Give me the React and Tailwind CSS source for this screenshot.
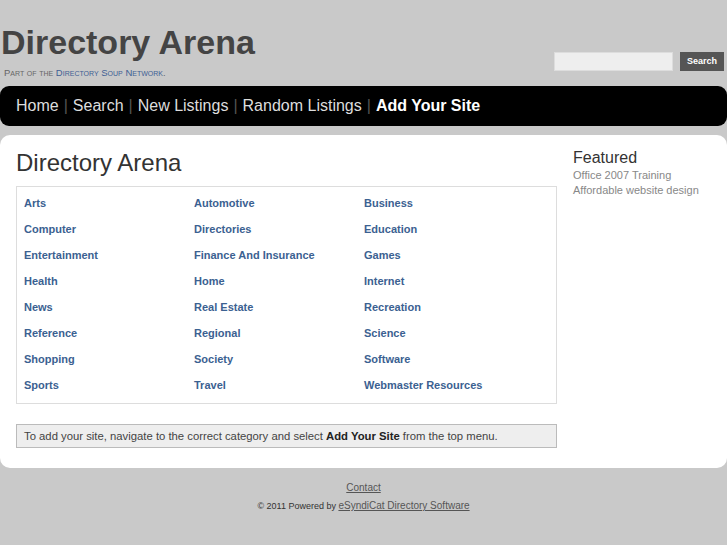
import React from 'react'

const categories = [
  ['Arts', 'Automotive', 'Business'],
  ['Computer', 'Directories', 'Education'],
  ['Entertainment', 'Finance And Insurance', 'Games'],
  ['Health', 'Home', 'Internet'],
  ['News', 'Real Estate', 'Recreation'],
  ['Reference', 'Regional', 'Science'],
  ['Shopping', 'Society', 'Software'],
  ['Sports', 'Travel', 'Webmaster Resources'],
]

const navItems = ['Home', 'Search', 'New Listings', 'Random Listings']

export default function App() {
  return (
    <div className="min-h-[545px] w-[727px] overflow-hidden bg-[#c9c9c9] font-['Liberation_Sans',Arial,sans-serif]">
      {/* Header */}
      <div className="flex h-[86px] items-start justify-between">
        <div className="pl-[1px] pt-[22px]">
          <h1 className="text-[34px] font-bold leading-[40px] text-[#444]">Directory Arena</h1>
          <p className="mt-[6px] pl-[3px] text-[9.5px] leading-[10px] text-[#666] [font-variant:small-caps]">
            Part of the <span className="text-[#3f5f94]">Directory Soup Network</span>.
          </p>
        </div>
        <div className="flex items-center gap-[7px] pr-[3px] pt-[52px]">
          <input className="h-[19px] w-[119px] border border-[#ddd] bg-[#eeeeee]" />
          <button className="h-[19px] w-[44px] bg-[#555] text-[9px] font-bold text-white">Search</button>
        </div>
      </div>

      {/* Nav */}
      <div className="flex h-[40px] items-center rounded-[9px] bg-black px-[16px] text-[16px] text-[#ddd]">
        {navItems.map((item) => (
          <React.Fragment key={item}>
            <span>{item}</span>
            <span className="mx-[5px] text-[#555]">|</span>
          </React.Fragment>
        ))}
        <span className="font-bold text-white">Add Your Site</span>
      </div>

      {/* Main panel */}
      <div className="mt-[9px] flex h-[333px] rounded-[10px] bg-white">
        <div className="w-[557px] pl-[16px] pt-[13px]">
          <h2 className="text-[24px] leading-[30px] text-[#333]">Directory Arena</h2>
          <div className="mt-[8px] border border-[#ddd] px-[7px] pb-[5px] pt-[3px]">
            {categories.map((row, i) => (
              <div key={i} className="grid h-[26px] grid-cols-[170px_170px_1fr] items-center">
                {row.map((c) => (
                  <a key={c} className="text-[11px] font-bold text-[#3b6191]">{c}</a>
                ))}
              </div>
            ))}
          </div>
          <div className="mt-[20px] border border-[#bbb] bg-[#eeeeee] px-[7px] py-[5px] text-[11.3px] leading-[12px] text-[#444]">
            To add your site, navigate to the correct category and select <b className="text-[#222]">Add Your Site</b> from the top menu.
          </div>
        </div>
        <div className="pl-[16px] pt-[13px]">
          <h3 className="text-[16px] leading-[20px] text-[#333]">Featured</h3>
          <p className="text-[11px] leading-[15px] text-[#888]">Office 2007 Training</p>
          <p className="text-[11px] leading-[15px] text-[#888]">Affordable website design</p>
        </div>
      </div>

      {/* Footer */}
      <div className="pt-[6px] text-center">
        <a className="text-[10px] text-[#555] underline">Contact</a>
        <p className="text-[9px] text-[#333]">
          © 2011 Powered by <a className="text-[10px] text-[#555] underline">eSyndiCat Directory Software</a>
        </p>
      </div>
    </div>
  )
}
